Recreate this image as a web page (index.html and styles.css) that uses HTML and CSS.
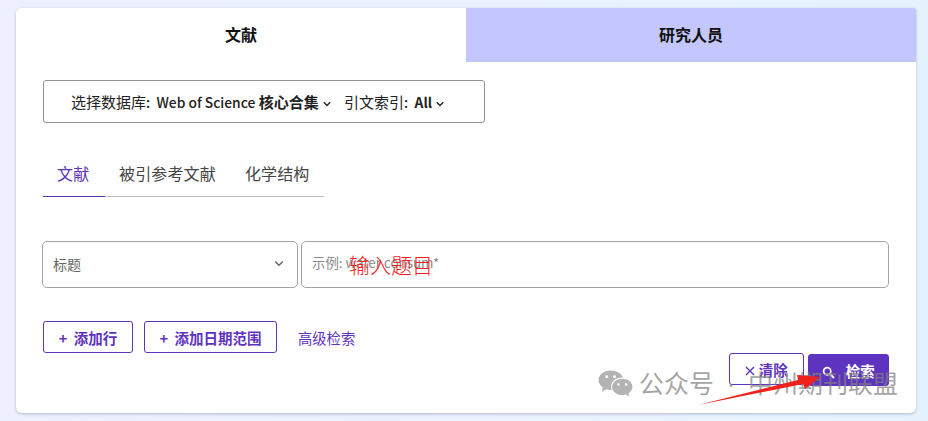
FILE: index.html
```html
<!DOCTYPE html>
<html lang="zh-CN">
<head>
<meta charset="utf-8">
<title>文献检索</title>
<link rel="stylesheet" href="styles.css">
</head>
<body>
<main class="card">
  <div class="main-tabs">
    <div class="main-tab active">文献</div>
    <div class="main-tab">研究人员</div>
  </div>
  <div class="card-body">
    <div class="db-box">
      <span class="db-item">选择数据库<span class="latin colon">:</span> <b><span class="latin">Web of Science</span> 核心合集</b>
        <svg class="chev" width="8" height="6" viewBox="0 0 8 6"><path d="M.8 1.2 4 4.4l3.2-3.2" fill="none" stroke="#222" stroke-width="1.4"/></svg></span>
      <span class="db-item">引文索引<span class="latin colon">:</span> <b class="latin">All</b>
        <svg class="chev" width="8" height="6" viewBox="0 0 8 6"><path d="M.8 1.2 4 4.4l3.2-3.2" fill="none" stroke="#222" stroke-width="1.4"/></svg></span>
    </div>
    <div class="sub-tabs">
      <div class="sub-tab active">文献</div>
      <div class="sub-tab">被引参考文献</div>
      <div class="sub-tab">化学结构</div>
    </div>
    <div class="query-row">
      <div class="field-select">标题
        <svg width="10" height="7" viewBox="0 0 10 7"><path d="M1.2 1.4 5 5.2l3.8-3.8" fill="none" stroke="#666" stroke-width="1.4"/></svg>
      </div>
      <div class="field-input">示例: water consum*</div>
    </div>
    <div class="actions">
      <button class="btn btn-row">+&nbsp;&nbsp;添加行</button>
      <button class="btn btn-date">+&nbsp;&nbsp;添加日期范围</button>
      <a class="adv-link">高级检索</a>
    </div>
    <div class="submit-row">
      <button class="btn btn-clear">
        <svg width="10" height="10" viewBox="0 0 10 10"><path d="M1 1l8 8M9 1l-8 8" stroke="#5e33bf" stroke-width="1.4"/></svg>
        清除</button>
      <button class="btn btn-search">
        <svg width="13" height="13" viewBox="0 0 13 13"><circle cx="5.2" cy="5.2" r="3.6" fill="none" stroke="#fff" stroke-width="1.7"/><path d="M8 8l4 4" stroke="#fff" stroke-width="2"/></svg>
        检索</button>
    </div>
  </div>
</main>

<div class="note">输入题目</div>
<div class="watermark">
  <svg width="35" height="29" viewBox="0 0 36 29"><path d="M13 1C6 1 .5 5.500.5 11c0 3.200 1.800 6 4.500 7.800L3.800 23l4.700-2.500c1.400.4 2.900.6 4.500.6l1 0C13.600 20 13.400 19 13.400 18c0-5.500 5.100-9.700 11.300-9.700l1 0C24.300 4 19.200 1 13 1z" fill="#b3b3b3"/><path d="M35.500 18c0-4.600-4.800-8.300-10.500-8.300S14.500 13.400 14.500 18s4.800 8.300 10.500 8.300c1.200 0 2.400-.2 3.500-.5l3.800 2.100-1-3.400c2.600-1.700 4.200-4.500 4.200-6.500z" fill="#b3b3b3"/><circle cx="9" cy="7.500" r="1.500" fill="#fff"/><circle cx="17" cy="7.500" r="1.500" fill="#fff"/><circle cx="21" cy="15.500" r="1.300" fill="#fff"/><circle cx="29" cy="15.500" r="1.300" fill="#fff"/></svg>
  <span>公众号<span class="wm-dot">·</span>中州期刊联盟</span>
</div>
<svg class="arrow" width="130" height="40" viewBox="0 0 130 40"><path d="M0 37 L100 12 L99 7 L122 9 L107 21 L105 16 Z" fill="#f0211d"/></svg>
</body>
</html>
```
FILE: styles.css
```css
* { box-sizing: border-box; }
html, body { height: 100%; }
body {
  margin: 0;
  width: 928px;
  height: 421px;
  overflow: hidden;
  padding: 8px 12px 8px 16px;
  background: linear-gradient(90deg, #eef0ff 0%, #e5f3fe 100%);
  font-family: "Noto Sans CJK SC", "Noto Sans", sans-serif;
  color: #222;
}
.card {
  position: relative;
  width: 900px;
  height: 405px;
  background: #fff;
  border-radius: 6px 2px 6px 6px;
  box-shadow: 0 1px 3px rgba(70, 70, 110, .35);
  overflow: hidden;
}
.main-tabs { display: flex; height: 54px; }
.main-tab {
  flex: 0 0 450px;
  display: flex;
  align-items: center;
  justify-content: center;
  padding-bottom: 2px;
  font-size: 16px;
  font-weight: 700;
  color: #111;
  background: #c3c7fe;
}
.main-tab.active { background: #fff; border-top-right-radius: 6px; }
.card-body { padding: 18px 27px 0; }
.db-box {
  width: 442px;
  height: 43px;
  border: 1px solid #949494;
  border-radius: 3px;
  display: flex;
  align-items: center;
  gap: 13px;
  padding-left: 27px;
  font-size: 15px;
  white-space: nowrap;
}
.db-item b { font-weight: 600; }
.latin { font-size: 13.8px; font-weight: 500; }
.colon { margin-right: 3px; }
.chev { margin-left: 1px; vertical-align: 1px; }
.sub-tabs {
  display: flex;
  width: 281px;
  margin-top: 27px;
  height: 47px;
  border-bottom: 1px solid #bdbdbd;
  font-size: 16px;
  letter-spacing: .15px;
  color: #444;
  white-space: nowrap;
}
.sub-tab { flex: none; padding: 11px 15px 0 14px; height: 47px; line-height: 24px; }
.sub-tab.active { color: #5e33bf; border-bottom: 1px solid #5e33bf; width: 62px; }
.query-row { display: flex; gap: 3px; margin: 44px 0 0 -1px; height: 47px; }
.field-select, .field-input {
  border: 1px solid #a3a3a3;
  border-radius: 5px;
  display: flex;
  align-items: center;
  font-size: 14px;
  color: #666;
}
.field-select { width: 256px; justify-content: space-between; padding: 0 13px 2px 10px; }
.field-input { width: 588px; padding: 0 10px 5px; color: #8a8a8a; font-size: 13.4px; }
.actions { display: flex; align-items: center; gap: 11px; margin-top: 33px; }
.btn {
  height: 32px;
  border: 1px solid #5e33bf;
  border-radius: 3px;
  background: #fff;
  color: #5e33bf;
  font: 600 14.5px "Noto Sans CJK SC", "Noto Sans", sans-serif;
  padding: 0;
  white-space: nowrap;
}
.btn-row { width: 90px; }
.btn-date { width: 133px; }
.adv-link { color: #5e33bf; font-size: 14.3px; margin-left: 10px; }
.submit-row {
  display: flex;
  justify-content: flex-end;
  gap: 4px;
}
.btn-clear { width: 75px; }
.btn-search { width: 81px; background: #5e33bf; color: #fff; position: relative; top: 1px; }
.btn-search svg { margin-right: 7px; vertical-align: -2px; }
.note {
  position: absolute;
  left: 349px;
  top: 249px;
  font: 300 21px/30px "Noto Sans CJK SC", sans-serif;
  color: #f5201c;
}
.arrow { position: absolute; left: 698px; top: 368px; }
.watermark {
  position: absolute;
  left: 598px;
  top: 367px;
  display: flex;
  align-items: center;
  gap: 6px;
  color: rgba(130, 130, 130, .72);
  font-size: 25px;
  line-height: 30px;
  white-space: nowrap;
}
.wm-dot { display: inline-block; width: 34px; text-align: center; font-size: 14px; vertical-align: 3px; }
```
